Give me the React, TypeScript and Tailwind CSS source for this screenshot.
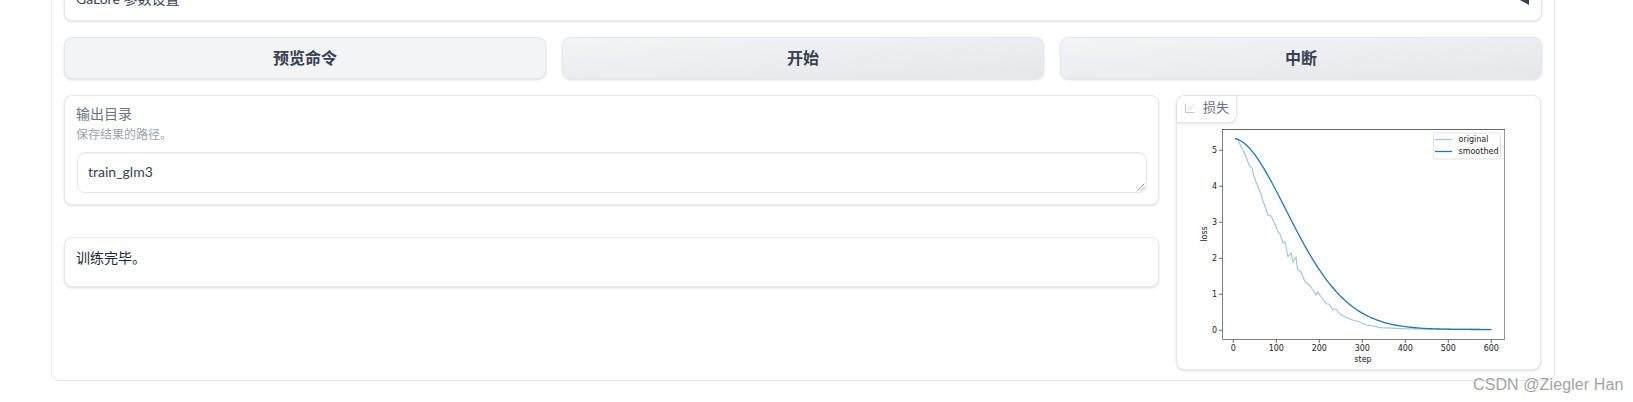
import React from 'react';

const FONT = "font-['Lato','Noto_Sans_CJK_SC',sans-serif]";

// loss curve fitted to the chart: 36px per unit on y, 43px per 100 steps on x
const smoothedPath = () => {
  const pts: string[] = [];
  for (let s = 4; s <= 600; s += 4) {
    const v = 5.31 * Math.exp(-Math.pow(s / 184.6, 1.85)) + 0.02;
    pts.push(`${pts.length ? 'L' : 'M'}${(1233.3 + s * 0.43).toFixed(2)} ${(330.3 - v * 36).toFixed(2)}`);
  }
  return pts.join(' ');
};

const original: [number, number][] = [
  [1235, 138.3], [1238, 140], [1241.7, 148], [1245, 154], [1248, 162], [1250, 166.7], [1252, 168], [1254, 176],
  [1256, 182], [1258, 186.7], [1261, 194], [1263, 201], [1265, 206], [1268, 215], [1271, 216], [1274, 222],
  [1278, 231.7], [1280, 234], [1283, 243], [1285, 242], [1288, 256.7], [1291, 253], [1293, 262], [1296, 257],
  [1297.7, 270], [1301, 272], [1305, 281.7], [1309, 285], [1313, 290], [1316, 295], [1317.5, 292], [1322, 298],
  [1326.7, 304], [1329, 304], [1333, 310], [1336, 309], [1340, 314], [1345, 317], [1350, 319.3], [1358, 321.5],
  [1366.7, 325], [1373, 326], [1380, 327.7], [1403, 328.7], [1430, 329.1], [1491.7, 329.3],
];

const toLine = (pts: [number, number][]) => pts.map(([x, y], i) => `${i ? 'L' : 'M'}${x} ${y}`).join(' ');

const LossPlot = () => {
  const xTicks = [0, 100, 200, 300, 400, 500, 600];
  const yTicks = [0, 1, 2, 3, 4, 5];
  const tickText = { fontFamily: "'DejaVu Sans', sans-serif", fontSize: 8, fill: '#222' };
  return (
    <svg width="363" height="272" className="block">
      {/* coordinates below are page pixels, shifted to the card's inner corner */}
      <g transform="translate(-1177 -97)">
        <path d={toLine(original)} fill="none" stroke="#1f77b4" strokeOpacity="0.42" strokeWidth="1.2" />
        <path d={smoothedPath()} fill="none" stroke="#1f77b4" strokeWidth="1.3" />
        <path d="M1222 129.5H1505" stroke="#666" strokeWidth="1" />
        <path d="M1504.5 130V339" stroke="#999" strokeWidth="1" />
        <path d="M1222.5 130V339.5H1505" fill="none" stroke="#808080" strokeWidth="1" />
        {xTicks.map((t) => {
          const x = 1233.3 + t * 0.43;
          return (
            <g key={t}>
              <path d={`M${x} 339.5V343`} stroke="#444" strokeWidth="0.8" />
              <text x={x} y="351" textAnchor="middle" {...tickText}>{t}</text>
            </g>
          );
        })}
        {yTicks.map((t) => {
          const y = 330.3 - t * 36;
          return (
            <g key={t}>
              <path d={`M1219 ${y}H1222.5`} stroke="#444" strokeWidth="0.8" />
              <text x="1217" y={y + 3} textAnchor="end" {...tickText}>{t}</text>
            </g>
          );
        })}
        <text x="1363" y="362" textAnchor="middle" {...tickText}>step</text>
        <text transform="translate(1207 234) rotate(-90)" textAnchor="middle" {...tickText}>loss</text>
        <rect x="1433.5" y="133" width="67" height="26" rx="1.5" fill="#fff" stroke="#dcdcdc" strokeWidth="0.8" />
        <path d="M1435 139.5H1452" stroke="#1f77b4" strokeOpacity="0.42" strokeWidth="1.2" />
        <path d="M1435 151.5H1452" stroke="#1f77b4" strokeWidth="1.3" />
        <text x="1458.5" y="142" {...tickText}>original</text>
        <text x="1458.5" y="154" {...tickText}>smoothed</text>
      </g>
    </svg>
  );
};

const App = () => {
  return (
    <div className={`relative h-[402px] overflow-hidden bg-white ${FONT}`}>
      <div className="ml-[51px] mt-[-40px] h-[421px] w-[1504px] rounded-lg border border-[#e5e7eb] px-3 pt-[19px]">
        {/* accordion, scrolled mostly out of view */}
        <div className="flex h-[41px] justify-between rounded-lg border border-[#e5e7eb] bg-white pl-[11px] pr-3 pt-[8px] shadow-sm">
          <span className="text-sm leading-5 text-[#374151]">GaLore 参数设置</span>
          <svg width="11" height="12" viewBox="0 0 11 12" className="mt-[4px]">
            <polygon points="0,6 11,0 11,12" fill="#374151" />
          </svg>
        </div>

        <div className="mt-4 grid grid-cols-3 gap-4">
          <button className="h-[42px] rounded-lg border border-[#e5e7eb] bg-[#f3f4f6] text-base font-semibold text-[#374151] shadow-sm">
            预览命令
          </button>
          <button className="h-[42px] rounded-lg border border-[#e5e7eb] bg-gradient-to-br from-[#f3f4f6] to-[#e5e7eb] text-base font-semibold text-[#374151] shadow-sm">
            开始
          </button>
          <button className="h-[42px] rounded-lg border border-[#e5e7eb] bg-gradient-to-br from-[#f3f4f6] to-[#e5e7eb] text-base font-semibold text-[#374151] shadow-sm">
            中断
          </button>
        </div>

        <div className="mt-[16px] flex gap-[17px]">
          <div className="w-[1095px]">
            <div className="h-[110px] rounded-lg border border-[#e5e7eb] bg-white px-[11px] pt-[8px] shadow-sm">
              <div className="text-sm leading-5 text-[#6b7280]">输出目录</div>
              <div className="mt-px text-xs leading-5 text-[#9ca3af]">保存结果的路径。</div>
              <div className="relative ml-px mt-[7px] h-[41px] w-[1070px] rounded-lg border border-[#e5e7eb] px-[10px] pt-[9px] text-sm leading-5 text-[#374151] shadow-[inset_0_1px_2px_rgba(0,0,0,0.05)]">
                train_glm3
                <svg width="8" height="8" viewBox="0 0 8 8" className="absolute bottom-px right-px">
                  <path d="M0.5 7.5L7.5 0.5M4 7.5L7.5 4" stroke="#555" strokeWidth="1" strokeDasharray="1 0.6" fill="none" />
                </svg>
              </div>
            </div>
            <div className="mt-[32px] h-[50px] rounded-lg border border-[#e5e7eb] bg-white px-[11px] pt-[10px] text-sm leading-5 text-[#1f2937] shadow-sm">
              训练完毕。
            </div>
          </div>

          <div className="relative h-[275px] w-[365px] rounded-lg border border-[#e5e7eb] bg-white pt-px shadow-sm">
            <div className="absolute left-0 top-0 flex h-[27px] w-[60px] items-center gap-[8px] rounded-br-lg rounded-tl-lg border-b border-r border-[#e5e7eb] bg-white pb-[2px] pl-2 text-xs text-[#6b7280] shadow-sm">
              <svg width="10" height="10" viewBox="0 0 10 10" fill="none" stroke="#c4c8cf" strokeWidth="1">
                <path d="M0.5 0.5V9.5H9.5" />
                <path d="M2 7.5L8.5 1M4 8L8.5 4" strokeDasharray="1.5 1" />
              </svg>
              <span className="text-[13px]">损失</span>
            </div>
            <LossPlot />
          </div>
        </div>
      </div>

      <div className="mt-[19px] pl-[772px] text-sm leading-5 text-[#6b7280]">通过 API 使用 · 使用 Gradio 构建</div>

      <div className="absolute left-[1473px] top-[375px] font-['Liberation_Sans',sans-serif] text-base leading-5 tracking-[0.1px] text-[#a3a3a3]">
        CSDN @Ziegler Han
      </div>
    </div>
  );
};

export default App;
